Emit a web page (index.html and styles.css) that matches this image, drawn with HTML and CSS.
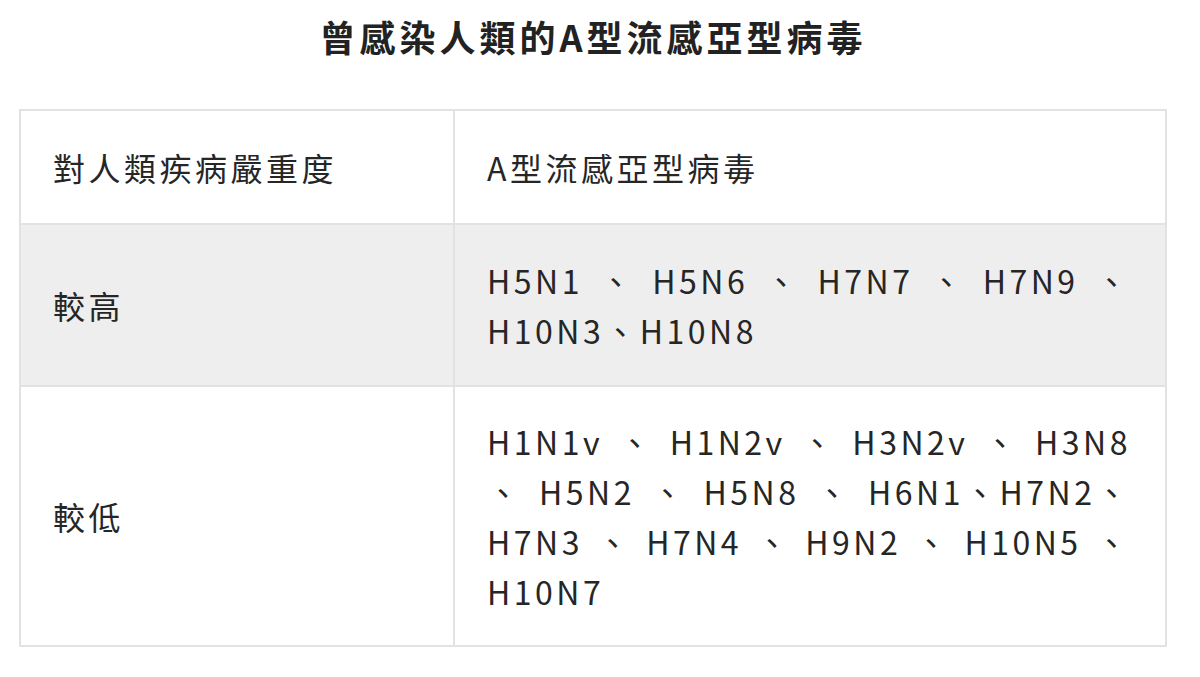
FILE: index.html
```html
<!DOCTYPE html>
<html lang="zh-Hant">
<head>
<meta charset="utf-8">
<title>曾感染人類的A型流感亞型病毒</title>
<link rel="stylesheet" href="styles.css">
</head>
<body>
<main class="page">
  <h1 class="title">曾感染人類的A型流感亞型病毒</h1>
  <table class="flu-table">
    <colgroup>
      <col class="col-severity">
      <col class="col-subtype">
    </colgroup>
    <tbody>
      <tr class="row row-head">
        <td class="cell">對人類疾病嚴重度</td>
        <td class="cell">A型流感亞型病毒</td>
      </tr>
      <tr class="row row-shaded">
        <td class="cell">較高</td>
        <td class="cell">
          <span class="line"><span>H5N1</span><span>、</span><span>H5N6</span><span>、</span><span>H7N7</span><span>、</span><span>H7N9</span><span>、</span></span>
          <span class="line line-last"><span>H10N3、H10N8</span></span>
        </td>
      </tr>
      <tr class="row row-low">
        <td class="cell">較低</td>
        <td class="cell">
          <span class="line"><span>H1N1v</span><span>、</span><span>H1N2v</span><span>、</span><span>H3N2v</span><span>、</span><span>H3N8</span></span>
          <span class="line"><span>、</span><span>H5N2</span><span>、</span><span>H5N8</span><span>、</span><span>H6N1、H7N2、</span></span>
          <span class="line"><span>H7N3</span><span>、</span><span>H7N4</span><span>、</span><span>H9N2</span><span>、</span><span>H10N5</span><span>、</span></span>
          <span class="line line-last"><span>H10N7</span></span>
        </td>
      </tr>
    </tbody>
  </table>
</main>
</body>
</html>
```

FILE: styles.css
```css
html, body {
  margin: 0;
  padding: 0;
  background: #ffffff;
}

body {
  font-family: "Noto Sans CJK TC", "Noto Sans", sans-serif;
  color: #262626;
}

.page {
  width: 1148px;
  padding: 11px 0 0 19px;
}

.title {
  margin: 0;
  font-size: 36px;
  line-height: 50px;
  font-weight: 700;
  letter-spacing: 4px;
  text-align: center;
  color: #222222;
}

.flu-table {
  margin-top: 48px;
  width: 1148px;
  table-layout: fixed;
  border-collapse: collapse;
  border: 2px solid #e2e2e2;
}

.col-severity {
  width: 434px;
}

.row-shaded {
  background: #eeeeee;
}

.cell {
  border: 2px solid #e2e2e2;
  padding: 30px 34px 30px 32px;
  font-size: 32px;
  line-height: 50px;
  letter-spacing: 3.5px;
  vertical-align: middle;
  text-align: left;
}

.row-head .cell {
  padding-top: 31px;
  padding-bottom: 31px;
}

.row-low .cell {
  padding-top: 29px;
  padding-bottom: 29px;
}

.line {
  display: flex;
  justify-content: space-between;
  white-space: nowrap;
}

.line-last {
  justify-content: flex-start;
}
```
